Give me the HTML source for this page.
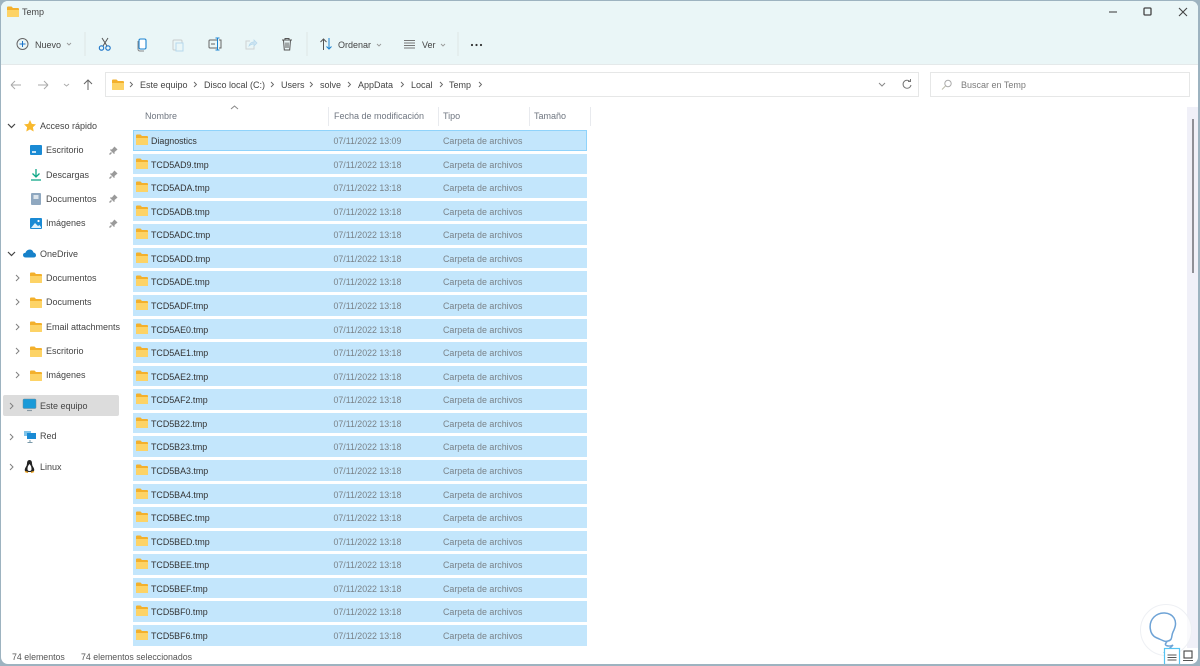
<!DOCTYPE html>
<html lang="es">
<head>
<meta charset="utf-8">
<style>
html,body{margin:0;padding:0;width:1200px;height:666px;overflow:hidden;background:#9db3c0}
body{font-family:"Liberation Sans",sans-serif;font-size:9px;color:#3a3a3a}
#w{position:absolute;left:1px;top:1px;width:1197px;height:663px;background:#fff;border-radius:7px;overflow:hidden}
#p{position:absolute;left:-1px;top:-1px;width:1200px;height:666px;filter:blur(.25px)}
.t{position:absolute;white-space:nowrap;line-height:12px;height:12px}
.a{position:absolute}
.g{color:#7b7b7b}
.h{color:#6f7680}
.r{position:absolute;left:133px;width:454px;height:20.5px;background:#c3e6fc}
.r b{position:absolute;left:18px;top:5px;font-weight:normal;line-height:12px;font-size:8.9px;color:#333;white-space:nowrap}
.r i{position:absolute;font-style:normal;left:200.5px;top:5px;line-height:12px;font-size:8.8px;color:#7a8288;white-space:nowrap}
.r u{position:absolute;text-decoration:none;left:310px;top:5px;line-height:12px;font-size:8.9px;color:#7a8288;white-space:nowrap}
.r svg{position:absolute;left:3px;top:4px}
svg{position:absolute;overflow:visible}
</style>
</head>
<body>
<div id="w"><div id="p">

<svg width="0" height="0" style="position:absolute"><defs>
<g id="f"><path d="M0 1.5Q0 .5 1 .5H4.500L6 2H11Q12 2 12 3V10Q12 11 11 11H1Q0 11 0 10Z" fill="#f3b02c"/><path d="M0 4H12V10Q12 11 11 11H1Q0 11 0 10Z" fill="#fdd366"/></g>
<g id="pin"><path d="M2.500 7.500L0.500 9.500M1.500 4.500L5.500 8.500M3 5.500L5.500 2.500L7.500 4.500L4.500 7" stroke="#9a9a9a" stroke-width="1.400" fill="#9a9a9a"/></g>
<g id="cr"><path d="M0 0L3 3L0 6" fill="none" stroke="#808080" stroke-width="1"/></g>
<g id="cd"><path d="M0 0L3.500 3.500L7 0" fill="none" stroke="#444" stroke-width="1.200"/></g>
</defs></svg>

<!-- title bar -->
<div class="a" style="left:0;top:0;width:1200px;height:64px;background:#eaf6f7;border-bottom:1px solid #e4e9ea"></div>
<svg style="left:7px;top:6px" width="12" height="11"><use href="#f"/></svg>
<div class="t" style="left:22px;top:6px;color:#444">Temp</div>
<svg style="left:1108px;top:8px" width="80" height="12">
<path d="M1 4H9" stroke="#555" stroke-width="1.200"/>
<rect x="36" y="0" width="7" height="7" rx="1" fill="none" stroke="#444" stroke-width="1.300"/>
<path d="M71 0L79 8M79 0L71 8" stroke="#444" stroke-width="1.100"/>
</svg>

<!-- toolbar -->
<svg style="left:0;top:0" width="500" height="64">
<circle cx="22.500" cy="44" r="5.500" fill="none" stroke="#666" stroke-width="1"/><path d="M22.500 41V47M19.500 44H25.500" stroke="#1a73c8" stroke-width="1"/>
<path d="M67 43L69 45L71 43" fill="none" stroke="#999" stroke-width=".9"/>
<path d="M85 32V56M307 32V56M458 32V56" stroke="#dfe5e6" stroke-width="1"/>
<!-- scissors -->
<path d="M102 38L107 46M108 38L103 46" stroke="#555" stroke-width="1"/><circle cx="101.500" cy="48" r="2.200" fill="none" stroke="#1a73c8" stroke-width="1.100"/><circle cx="108" cy="48" r="2.200" fill="none" stroke="#1a73c8" stroke-width="1.100"/>
<!-- copy -->
<rect x="139" y="39" width="7" height="10" rx="1.500" fill="#fff" stroke="#1a82d0" stroke-width="1.100"/><path d="M138 41V49Q138 51 140 51H144" fill="none" stroke="#888" stroke-width="1"/>
<!-- paste -->
<rect x="173" y="40" width="9" height="10" rx="1" fill="none" stroke="#c8cccc" stroke-width="1"/><rect x="176" y="43" width="7" height="8" fill="#eaf6f7" stroke="#b5d8ec" stroke-width="1"/>
<!-- rename -->
<path d="M217 40H210Q209 40 209 41V47Q209 48 210 48H217" fill="none" stroke="#666" stroke-width="1"/><path d="M211 44H215" stroke="#666" stroke-width="1"/><path d="M217.500 38V50M215.500 38H219.500M215.500 50H219.500" stroke="#1a82d0" stroke-width="1"/>
<path d="M219 40H221V48H219" fill="none" stroke="#666" stroke-width="1"/>
<!-- share -->
<path d="M250 41H246V49H254V46" fill="none" stroke="#cfd3d3" stroke-width="1"/><path d="M249 46Q250 42 254 42V40L257 43L254 46V44Q251 44 249 46Z" fill="#cfe5f2" stroke="#b5d8ec" stroke-width=".7"/>
<!-- trash -->
<path d="M282 40H292M285 40V38.500H289V40M283.500 40L284.300 50H289.700L290.500 40M286 42.500V48M288 42.500V48" fill="none" stroke="#555" stroke-width="1"/>
<!-- sort -->
<path d="M323.500 50V39M320.500 42L323.500 39L326.500 42" fill="none" stroke="#555" stroke-width="1"/><path d="M329 38V49M326.500 46.500L329 49L331.500 46.500" fill="none" stroke="#1a82d0" stroke-width="1"/>
<path d="M377 44L379 46L381 44" fill="none" stroke="#999" stroke-width=".9"/>
<!-- view -->
<path d="M404 40.500H415M404 43H415M404 45.500H415M404 48H415" stroke="#777" stroke-width="1"/>
<path d="M441 44L443 46L445 44" fill="none" stroke="#999" stroke-width=".9"/>
<circle cx="472" cy="45" r="1.100" fill="#333"/><circle cx="476.500" cy="45" r="1.100" fill="#333"/><circle cx="481" cy="45" r="1.100" fill="#333"/>
</svg>
<div class="t" style="left:35px;top:39px;color:#444">Nuevo</div>
<div class="t" style="left:338px;top:39px;color:#444">Ordenar</div>
<div class="t" style="left:422px;top:39px;color:#444">Ver</div>

<!-- address row -->
<svg style="left:0;top:70px" width="110" height="30">
<path d="M11 15H21M11 15L15 11M11 15L15 19" fill="none" stroke="#aaa" stroke-width="1"/>
<path d="M38 15H48M48 15L44 11M48 15L44 19" fill="none" stroke="#aaa" stroke-width="1"/>
<path d="M64 14L66.500 16L69 14" fill="none" stroke="#aaa" stroke-width=".9"/>
<path d="M88 20V10M84 14L88 10L92 14" fill="none" stroke="#666" stroke-width="1"/>
</svg>
<div class="a" style="left:105px;top:72px;width:814px;height:25px;border:1px solid #e6e7e7;box-sizing:border-box"></div>
<svg style="left:112px;top:79px" width="12" height="11"><use href="#f"/></svg>
<svg style="left:130px;top:82px" width="400" height="8">
<g fill="none" stroke="#666" stroke-width=".9"><path d="M0 0L2.500 2.500L0 5"/><path d="M64 0L66.500 2.500L64 5"/><path d="M141 0L143.500 2.500L141 5"/><path d="M180 0L182.500 2.500L180 5"/><path d="M218 0L220.500 2.500L218 5"/><path d="M271 0L273.500 2.500L271 5"/><path d="M310 0L312.500 2.500L310 5"/><path d="M349 0L351.500 2.500L349 5"/></g>
</svg>
<div class="t" style="left:140px;top:79px;color:#444">Este equipo</div>
<div class="t" style="left:204px;top:79px;color:#444">Disco local (C:)</div>
<div class="t" style="left:281px;top:79px;color:#444">Users</div>
<div class="t" style="left:320px;top:79px;color:#444">solve</div>
<div class="t" style="left:358px;top:79px;color:#444">AppData</div>
<div class="t" style="left:411px;top:79px;color:#444">Local</div>
<div class="t" style="left:449px;top:79px;color:#444">Temp</div>
<svg style="left:879px;top:78px" width="35" height="14">
<path d="M0 5L3 8L6 5" fill="none" stroke="#888" stroke-width="1"/>
<path d="M31 3.500A4 4 0 1 0 32 7" fill="none" stroke="#777" stroke-width="1"/><path d="M29 3.500H31.500V1" fill="none" stroke="#777" stroke-width="1"/>
</svg>
<div class="a" style="left:930px;top:72px;width:260px;height:25px;border:1px solid #e6e7e7;box-sizing:border-box"></div>
<svg style="left:941px;top:79px" width="12" height="12"><circle cx="7" cy="4.500" r="3.200" fill="none" stroke="#aaa" stroke-width="1"/><path d="M4.500 7L1 10.500" stroke="#bba" stroke-width="1"/></svg>
<div class="t g" style="left:961px;top:79px">Buscar en Temp</div>

<!-- column header -->
<svg style="left:230px;top:105px" width="10" height="6"><path d="M1 4L4.500 1L8 4" fill="none" stroke="#888" stroke-width="1"/></svg>
<div class="t h" style="left:145px;top:110px">Nombre</div>
<div class="t h" style="left:334px;top:110px">Fecha de modificación</div>
<div class="t h" style="left:443px;top:110px">Tipo</div>
<div class="t h" style="left:534px;top:110px">Tamaño</div>
<div class="a" style="left:328px;top:107px;width:1px;height:19px;background:#e8eaee"></div>
<div class="a" style="left:438px;top:107px;width:1px;height:19px;background:#e8eaee"></div>
<div class="a" style="left:529px;top:107px;width:1px;height:19px;background:#e8eaee"></div>
<div class="a" style="left:590px;top:107px;width:1px;height:19px;background:#e8eaee"></div>

<!-- nav pane -->
<div class="a" style="left:3px;top:395px;width:116px;height:21px;background:#dcdcdc;border-radius:2px"></div>

<svg style="left:8px;top:124px" width="8" height="5"><use href="#cd"/></svg>
<svg style="left:24px;top:120px" width="12" height="12"><path d="M6 0L7.800 3.900L12 4.400L8.900 7.200L9.700 11.500L6 9.400L2.300 11.500L3.100 7.200L0 4.400L4.200 3.900Z" fill="#f8b92e"/></svg>
<div class="t" style="left:40px;top:120px;color:#444">Acceso rápido</div>

<svg style="left:30px;top:145px" width="12" height="10"><rect width="12" height="10" rx="1" fill="#1a8ad4"/><path d="M2 7H6" stroke="#fff" stroke-width="1.500"/></svg>
<div class="t" style="left:46px;top:144px;color:#444">Escritorio</div>
<svg style="left:109px;top:145px" width="9" height="10"><use href="#pin"/></svg>

<svg style="left:30px;top:169px" width="12" height="12"><path d="M6 0V7M2.500 4.500L6 8L9.500 4.500" fill="none" stroke="#10a888" stroke-width="1.300"/><path d="M1 11H11" stroke="#10a888" stroke-width="1.300"/></svg>
<div class="t" style="left:46px;top:169px;color:#444">Descargas</div>
<svg style="left:109px;top:169px" width="9" height="10"><use href="#pin"/></svg>

<svg style="left:31px;top:193px" width="10" height="12"><rect width="10" height="12" rx="1" fill="#8fa8c0"/><rect x="2.500" y="2" width="5" height="4" fill="#dce5ec"/></svg>
<div class="t" style="left:46px;top:193px;color:#444">Documentos</div>
<svg style="left:109px;top:193px" width="9" height="10"><use href="#pin"/></svg>

<svg style="left:30px;top:218px" width="12" height="11"><rect width="12" height="11" rx="1" fill="#1a8ad4"/><path d="M1 10L5 5L8 8L9.500 7L11 9V10Z" fill="#e0f2fb"/><circle cx="8.500" cy="3" r="1.100" fill="#fff"/></svg>
<div class="t" style="left:46px;top:217px;color:#444">Imágenes</div>
<svg style="left:109px;top:218px" width="9" height="10"><use href="#pin"/></svg>

<svg style="left:8px;top:252px" width="8" height="5"><use href="#cd"/></svg>
<svg style="left:23px;top:249px" width="13" height="9"><path d="M3 8.500Q0 8.500 0 6Q0 4 2.500 3.800Q3.500 .5 7 .5Q9.500 .5 10.500 3.500Q13 4 13 6.300Q13 8.500 10.500 8.500Z" fill="#1781c9"/></svg>
<div class="t" style="left:40px;top:248px;color:#444">OneDrive</div>

<svg style="left:16px;top:275px" width="4" height="7"><use href="#cr"/></svg>
<svg style="left:30px;top:272px" width="12" height="11"><use href="#f"/></svg>
<div class="t" style="left:46px;top:272px;color:#444">Documentos</div>
<svg style="left:16px;top:299px" width="4" height="7"><use href="#cr"/></svg>
<svg style="left:30px;top:297px" width="12" height="11"><use href="#f"/></svg>
<div class="t" style="left:46px;top:296px;color:#444">Documents</div>
<svg style="left:16px;top:324px" width="4" height="7"><use href="#cr"/></svg>
<svg style="left:30px;top:321px" width="12" height="11"><use href="#f"/></svg>
<div class="t" style="left:46px;top:321px;color:#444">Email attachments</div>
<svg style="left:16px;top:348px" width="4" height="7"><use href="#cr"/></svg>
<svg style="left:30px;top:346px" width="12" height="11"><use href="#f"/></svg>
<div class="t" style="left:46px;top:345px;color:#444">Escritorio</div>
<svg style="left:16px;top:372px" width="4" height="7"><use href="#cr"/></svg>
<svg style="left:30px;top:370px" width="12" height="11"><use href="#f"/></svg>
<div class="t" style="left:46px;top:369px;color:#444">Imágenes</div>

<svg style="left:10px;top:403px" width="4" height="7"><use href="#cr"/></svg>
<svg style="left:23px;top:399px" width="13" height="13"><rect width="13" height="9.500" rx="1" fill="#1a9ad8" stroke="#6a8a9a" stroke-width=".5"/><path d="M4 11.500H9" stroke="#8a9aa5" stroke-width="1.200"/></svg>
<div class="t" style="left:40px;top:400px;color:#444">Este equipo</div>

<svg style="left:10px;top:434px" width="4" height="7"><use href="#cr"/></svg>
<svg style="left:23px;top:430px" width="13" height="13"><rect x="1" y="1" width="7" height="5" fill="#7fc4ea"/><rect x="4" y="3" width="9" height="6" fill="#1a8ad4"/><path d="M7 10V13M4.500 12.500H9.500" stroke="#7a9aaa" stroke-width="1"/></svg>
<div class="t" style="left:40px;top:430px;color:#444">Red</div>

<svg style="left:10px;top:464px" width="4" height="7"><use href="#cr"/></svg>
<svg style="left:24px;top:460px" width="11" height="13"><path d="M5.500 0Q8 0 8 3.500Q8 5.500 9.500 7.500Q11 10 9.500 11.500L7 12H4L1.500 11.500Q0 10 1.500 7.500Q3 5.500 3 3.500Q3 0 5.500 0Z" fill="#222"/><path d="M5.500 4Q7.500 6 7.500 9Q7.500 11 5.500 11Q3.500 11 3.500 9Q3.500 6 5.500 4Z" fill="#fff"/><path d="M1 11.500L4 12.500M10 11.500L7 12.500" stroke="#e8a020" stroke-width="1.400"/></svg>
<div class="t" style="left:40px;top:461px;color:#444">Linux</div>

<!-- rows -->
<div class="r" style="top:130px;box-shadow:inset 0 0 0 1px #8fd3fb"><svg width="12" height="11"><use href="#f"/></svg><b>Diagnostics</b><i>07/11/2022 13:09</i><u>Carpeta de archivos</u></div>
<div class="r" style="top:153.6px"><svg width="12" height="11"><use href="#f"/></svg><b>TCD5AD9.tmp</b><i>07/11/2022 13:18</i><u>Carpeta de archivos</u></div>
<div class="r" style="top:177.1px"><svg width="12" height="11"><use href="#f"/></svg><b>TCD5ADA.tmp</b><i>07/11/2022 13:18</i><u>Carpeta de archivos</u></div>
<div class="r" style="top:200.7px"><svg width="12" height="11"><use href="#f"/></svg><b>TCD5ADB.tmp</b><i>07/11/2022 13:18</i><u>Carpeta de archivos</u></div>
<div class="r" style="top:224.3px"><svg width="12" height="11"><use href="#f"/></svg><b>TCD5ADC.tmp</b><i>07/11/2022 13:18</i><u>Carpeta de archivos</u></div>
<div class="r" style="top:247.9px"><svg width="12" height="11"><use href="#f"/></svg><b>TCD5ADD.tmp</b><i>07/11/2022 13:18</i><u>Carpeta de archivos</u></div>
<div class="r" style="top:271.4px"><svg width="12" height="11"><use href="#f"/></svg><b>TCD5ADE.tmp</b><i>07/11/2022 13:18</i><u>Carpeta de archivos</u></div>
<div class="r" style="top:295px"><svg width="12" height="11"><use href="#f"/></svg><b>TCD5ADF.tmp</b><i>07/11/2022 13:18</i><u>Carpeta de archivos</u></div>
<div class="r" style="top:318.6px"><svg width="12" height="11"><use href="#f"/></svg><b>TCD5AE0.tmp</b><i>07/11/2022 13:18</i><u>Carpeta de archivos</u></div>
<div class="r" style="top:342.1px"><svg width="12" height="11"><use href="#f"/></svg><b>TCD5AE1.tmp</b><i>07/11/2022 13:18</i><u>Carpeta de archivos</u></div>
<div class="r" style="top:365.7px"><svg width="12" height="11"><use href="#f"/></svg><b>TCD5AE2.tmp</b><i>07/11/2022 13:18</i><u>Carpeta de archivos</u></div>
<div class="r" style="top:389.3px"><svg width="12" height="11"><use href="#f"/></svg><b>TCD5AF2.tmp</b><i>07/11/2022 13:18</i><u>Carpeta de archivos</u></div>
<div class="r" style="top:412.8px"><svg width="12" height="11"><use href="#f"/></svg><b>TCD5B22.tmp</b><i>07/11/2022 13:18</i><u>Carpeta de archivos</u></div>
<div class="r" style="top:436.4px"><svg width="12" height="11"><use href="#f"/></svg><b>TCD5B23.tmp</b><i>07/11/2022 13:18</i><u>Carpeta de archivos</u></div>
<div class="r" style="top:460px"><svg width="12" height="11"><use href="#f"/></svg><b>TCD5BA3.tmp</b><i>07/11/2022 13:18</i><u>Carpeta de archivos</u></div>
<div class="r" style="top:483.6px"><svg width="12" height="11"><use href="#f"/></svg><b>TCD5BA4.tmp</b><i>07/11/2022 13:18</i><u>Carpeta de archivos</u></div>
<div class="r" style="top:507.1px"><svg width="12" height="11"><use href="#f"/></svg><b>TCD5BEC.tmp</b><i>07/11/2022 13:18</i><u>Carpeta de archivos</u></div>
<div class="r" style="top:530.7px"><svg width="12" height="11"><use href="#f"/></svg><b>TCD5BED.tmp</b><i>07/11/2022 13:18</i><u>Carpeta de archivos</u></div>
<div class="r" style="top:554.3px"><svg width="12" height="11"><use href="#f"/></svg><b>TCD5BEE.tmp</b><i>07/11/2022 13:18</i><u>Carpeta de archivos</u></div>
<div class="r" style="top:577.8px"><svg width="12" height="11"><use href="#f"/></svg><b>TCD5BEF.tmp</b><i>07/11/2022 13:18</i><u>Carpeta de archivos</u></div>
<div class="r" style="top:601.4px"><svg width="12" height="11"><use href="#f"/></svg><b>TCD5BF0.tmp</b><i>07/11/2022 13:18</i><u>Carpeta de archivos</u></div>
<div class="r" style="top:625px"><svg width="12" height="11"><use href="#f"/></svg><b>TCD5BF6.tmp</b><i>07/11/2022 13:18</i><u>Carpeta de archivos</u></div>

<!-- scrollbar -->
<div class="a" style="left:1187px;top:107px;width:11px;height:541px;background:#f0f0f8"></div>
<div class="a" style="left:1192px;top:119px;width:2px;height:154px;background:#8f8f96"></div>

<!-- status bar -->
<div class="t" style="left:12px;top:651px;color:#555;font-size:8.8px">74 elementos</div>
<div class="t" style="left:81px;top:651px;color:#555;font-size:8.8px">74 elementos seleccionados</div>

<!-- watermark & view switch -->
<svg style="left:1140px;top:604px" width="60" height="62">
<circle cx="26" cy="26" r="25.500" fill="#fff" fill-opacity=".6" stroke="#eef0f4" stroke-width="1"/>
<path d="M17 34C9 31 8 19 14 13C20 7 30 8 34 14C37 19 35 24 33 28C31 32 33 36 28 37C25 38 24 37 17 34ZM27 38C22 42 30 43 33 41C31 44 25 47 24 49" fill="none" stroke="#6ea3d6" stroke-width="1.500"/>
<rect x="24.500" y="44.500" width="15" height="16" fill="#fff" stroke="#56c4f2" stroke-width="1.200"/>
<path d="M27.500 51H36.500M27.500 53.500H36.500M27.500 56H36.500" stroke="#555" stroke-width="1.100"/>
<rect x="44" y="47" width="8" height="7" fill="#fff" stroke="#444" stroke-width="1.100"/><path d="M43 56.500H53" stroke="#555" stroke-width="1"/>
</svg>

</div></div>
</body>
</html>
